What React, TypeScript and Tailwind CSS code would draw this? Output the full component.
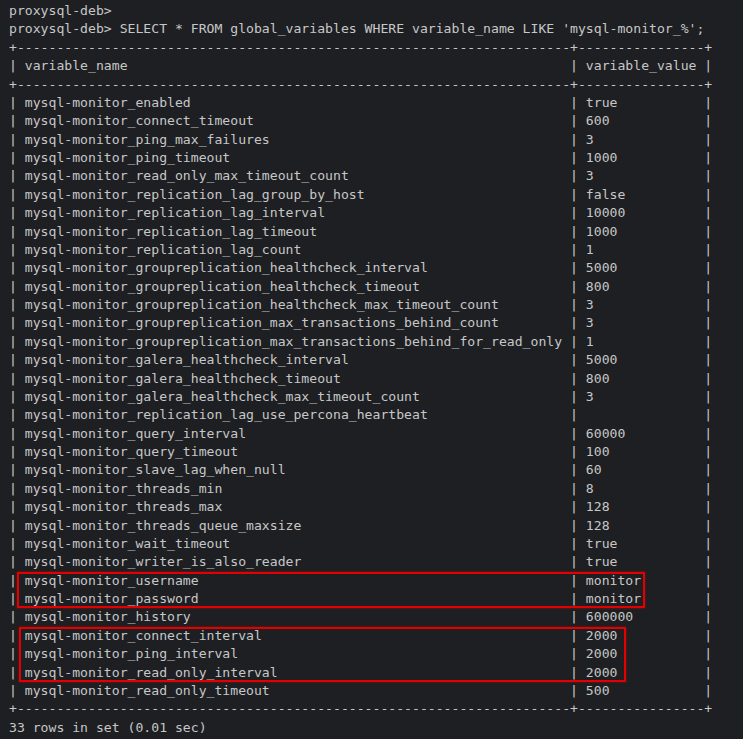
import React from "react";

const rows: [string, string][] = [
  ["mysql-monitor_enabled", "true"],
  ["mysql-monitor_connect_timeout", "600"],
  ["mysql-monitor_ping_max_failures", "3"],
  ["mysql-monitor_ping_timeout", "1000"],
  ["mysql-monitor_read_only_max_timeout_count", "3"],
  ["mysql-monitor_replication_lag_group_by_host", "false"],
  ["mysql-monitor_replication_lag_interval", "10000"],
  ["mysql-monitor_replication_lag_timeout", "1000"],
  ["mysql-monitor_replication_lag_count", "1"],
  ["mysql-monitor_groupreplication_healthcheck_interval", "5000"],
  ["mysql-monitor_groupreplication_healthcheck_timeout", "800"],
  ["mysql-monitor_groupreplication_healthcheck_max_timeout_count", "3"],
  ["mysql-monitor_groupreplication_max_transactions_behind_count", "3"],
  ["mysql-monitor_groupreplication_max_transactions_behind_for_read_only", "1"],
  ["mysql-monitor_galera_healthcheck_interval", "5000"],
  ["mysql-monitor_galera_healthcheck_timeout", "800"],
  ["mysql-monitor_galera_healthcheck_max_timeout_count", "3"],
  ["mysql-monitor_replication_lag_use_percona_heartbeat", ""],
  ["mysql-monitor_query_interval", "60000"],
  ["mysql-monitor_query_timeout", "100"],
  ["mysql-monitor_slave_lag_when_null", "60"],
  ["mysql-monitor_threads_min", "8"],
  ["mysql-monitor_threads_max", "128"],
  ["mysql-monitor_threads_queue_maxsize", "128"],
  ["mysql-monitor_wait_timeout", "true"],
  ["mysql-monitor_writer_is_also_reader", "true"],
  ["mysql-monitor_username", "monitor"],
  ["mysql-monitor_password", "monitor"],
  ["mysql-monitor_history", "600000"],
  ["mysql-monitor_connect_interval", "2000"],
  ["mysql-monitor_ping_interval", "2000"],
  ["mysql-monitor_read_only_interval", "2000"],
  ["mysql-monitor_read_only_timeout", "500"],
];

const W1 = 68;
const W2 = 14;
const border = "+" + "-".repeat(W1 + 2) + "+" + "-".repeat(W2 + 2) + "+";
const fmt = (a: string, b: string) =>
  "| " + a.padEnd(W1, " ") + " | " + b.padEnd(W2, " ") + " |";

function Line({ text }: { text: string }) {
  return (
    <div className="pl-[9px] h-[18.375px] whitespace-pre">{text}</div>
  );
}

export default function App() {
  const group1 = rows.slice(26, 28);
  const group2 = rows.slice(29, 32);
  return (
    <div
      className="w-[743px] h-[739px] bg-[#1e1f22] text-[#c6c7c8] text-[13.14px] leading-[18.375px] pt-[2px] overflow-hidden"
      style={{ fontFamily: '"DejaVu Sans Mono", monospace' }}
    >
      <Line text="proxysql-deb>" />
      <Line text="proxysql-deb> SELECT * FROM global_variables WHERE variable_name LIKE 'mysql-monitor_%';" />
      <Line text={border} />
      <Line text={fmt("variable_name", "variable_value")} />
      <Line text={border} />
      {rows.slice(0, 26).map(([a, b]) => (
        <Line key={a} text={fmt(a, b)} />
      ))}
      <div className="relative">
        {group1.map(([a, b]) => (
          <Line key={a} text={fmt(a, b)} />
        ))}
        <div className="absolute top-0 bottom-0 left-[17px] w-[628px] border-2 border-[#e30000] shadow-[0_0_2px_rgba(255,0,0,0.5)]" />
      </div>
      <Line text={fmt(rows[28][0], rows[28][1])} />
      <div className="relative">
        {group2.map(([a, b]) => (
          <Line key={a} text={fmt(a, b)} />
        ))}
        <div className="absolute top-0 bottom-0 left-[19px] w-[607px] border-2 border-[#e30000] shadow-[0_0_2px_rgba(255,0,0,0.5)]" />
      </div>
      <Line text={fmt(rows[32][0], rows[32][1])} />
      <Line text={border} />
      <Line text="33 rows in set (0.01 sec)" />
    </div>
  );
}
